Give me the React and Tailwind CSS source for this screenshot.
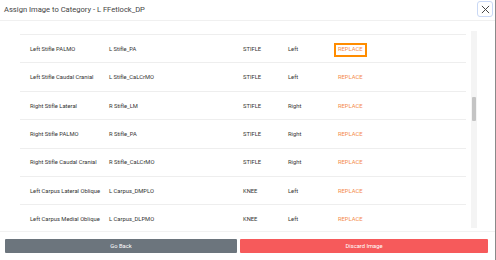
import React from "react";

const rows = [
  ["Left Stifle PALMO", "L Stifle_PA", "STIFLE", "Left"],
  ["Left Stifle Caudal Cranial", "L Stifle_CaLCrMO", "STIFLE", "Left"],
  ["Right Stifle Lateral", "R Stifle_LM", "STIFLE", "Right"],
  ["Right Stifle PALMO", "R Stifle_PA", "STIFLE", "Right"],
  ["Right Stifle Caudal Cranial", "R Stifle_CaLCrMO", "STIFLE", "Right"],
  ["Left Carpus Lateral Oblique", "L Carpus_DMPLO", "KNEE", "Left"],
  ["Left Carpus Medial Oblique", "L Carpus_DLPMO", "KNEE", "Left"],
];

export default function App() {
  return (
    <div className="w-[496px] h-[260px] bg-white relative border-r border-[#8a8a8a] overflow-hidden font-['Roboto',sans-serif] text-[#333]">
      {/* Header */}
      <div className="h-[21px] flex items-center px-[4px] border-b border-[#f0f0f0]">
        <h2 className="text-[7.6px] text-[#444] leading-none">Assign Image to Category - L FFetlock_DP</h2>
      </div>
      <button className="absolute top-[1px] right-[2px] w-[16px] h-[16px] flex items-center justify-center border border-[#c9d8f5] rounded-[3px] bg-white">
        <svg width="9" height="9" viewBox="0 0 10 10" stroke="#444" strokeWidth="1.1">
          <path d="M1 1L9 9M9 1L1 9" />
        </svg>
      </button>

      {/* Body */}
      <div className="h-[210px] flex pt-[10px]">
        <div className="ml-[20px] w-[446px] h-[197px] overflow-hidden pt-[3px]">
          {rows.map((r, i) => (
            <div key={i} className="h-[28.4px] border-t border-[#eeeeee] flex items-center pt-[2px] text-[5.8px] leading-none">
              <div className="w-[89px] pl-[10px]">{r[0]}</div>
              <div className="w-[134px]">{r[1]}</div>
              <div className="w-[45px]">{r[2]}</div>
              <div className="w-[46px]">{r[3]}</div>
              <span
                className={
                  "px-[2px] py-[2px] border-2 text-[#f4894a] " +
                  (i === 0 ? "border-[#ff8c00]" : "border-transparent")
                }
              >
                REPLACE
              </span>
            </div>
          ))}
        </div>
        <div className="ml-[5px] w-[6px] h-[197px] bg-[#f4f4f4] relative">
          <div className="absolute left-[1px] top-[66px] w-[4px] h-[24px] bg-[#c4c4c4] rounded-[1px]" />
        </div>
      </div>

      {/* Footer */}
      <div className="border-t border-[#f2f2f2] flex gap-[3px] pl-[5px] pr-[7px] pt-[7px]">
        <button className="w-[232px] h-[14px] bg-[#6c757d] text-white text-[5.8px] rounded-[1px]">Go Back</button>
        <button className="flex-1 h-[14px] bg-[#f65a5b] text-white text-[5.8px] rounded-[1px]">Discard Image</button>
      </div>
    </div>
  );
}
